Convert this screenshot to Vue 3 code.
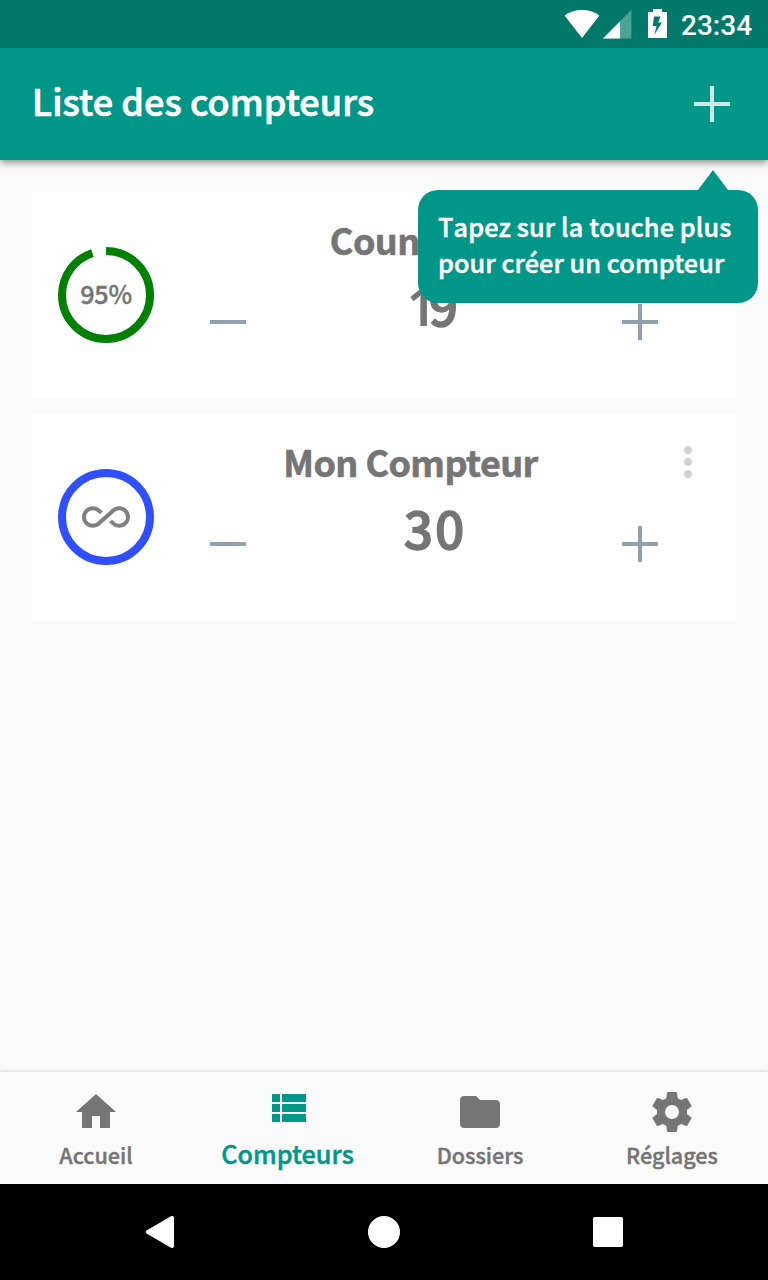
<script setup>
const counters = [
  { name: 'Counter 1', value: 19, percent: 95, color: '#008000' },
  { name: 'Mon Compteur', value: 30, percent: null, color: '#304ffe' },
]

const tabs = [
  { label: 'Accueil', path: 'M10 20v-6h4v6h5v-8h3L12 3 2 12h3v8z' },
  { label: 'Compteurs', active: true, path: 'M9 5v4h12V5M9 19h12v-4H9M9 14h12v-4H9M4 9h4V5H4M4 19h4v-4H4M4 14h4v-4H4z' },
  { label: 'Dossiers', path: 'M10 4H4c-1.1 0-2 .9-2 2v12c0 1.1.9 2 2 2h16c1.1 0 2-.9 2-2V8c0-1.1-.9-2-2-2h-8l-2-2z' },
  { label: 'Réglages', path: 'M12 15.5A3.5 3.5 0 0 1 8.5 12 3.5 3.5 0 0 1 12 8.5a3.5 3.5 0 0 1 3.5 3.5 3.5 3.5 0 0 1-3.5 3.5m7.43-2.53c.04-.32.07-.64.07-.97s-.03-.66-.07-1l2.11-1.63c.19-.15.24-.42.12-.64l-2-3.46c-.12-.22-.39-.31-.61-.22l-2.49 1c-.52-.39-1.06-.73-1.69-.98l-.37-2.65A.506.506 0 0 0 14 2h-4c-.25 0-.46.18-.5.42l-.37 2.65c-.63.25-1.17.59-1.69.98l-2.49-1c-.22-.09-.49 0-.61.22l-2 3.46c-.13.22-.07.49.12.64L4.57 11c-.04.34-.07.67-.07 1s.03.65.07.97l-2.11 1.66c-.19.15-.25.42-.12.64l2 3.46c.12.22.39.3.61.22l2.49-1.01c.52.4 1.06.74 1.69.99l.37 2.65c.04.24.25.42.5.42h4c.25 0 .46-.18.5-.42l.37-2.65c.63-.26 1.17-.59 1.69-.99l2.49 1.01c.22.08.49 0 .61-.22l2-3.46c.12-.22.07-.49-.12-.64l-2.11-1.66z' },
]

const infinity = 'M18.6 6.62c-1.44 0-2.8.56-3.77 1.53L7.8 14.39c-.64.64-1.49.99-2.4.99-1.87 0-3.39-1.51-3.39-3.38S3.53 8.62 5.4 8.62c.91 0 1.76.35 2.44 1.03l1.13 1 1.51-1.34L9.22 8.2C8.2 7.18 6.84 6.62 5.4 6.62 2.42 6.62 0 9.04 0 12s2.42 5.38 5.4 5.38c1.44 0 2.8-.56 3.77-1.53l7.03-6.24c.64-.64 1.49-.99 2.4-.99 1.87 0 3.39 1.51 3.39 3.38s-1.52 3.38-3.39 3.38c-.9 0-1.76-.35-2.44-1.03l-1.14-1.01-1.51 1.34 1.27 1.12c1.02 1.01 2.37 1.57 3.82 1.57 2.98 0 5.4-2.41 5.4-5.38s-2.42-5.37-5.4-5.37z'
</script>

<template>
  <div class="screen">
    <header class="status">
      <svg width="68" height="30" viewBox="0 0 68 30">
        <path fill="#fff" d="M.6 6.6C5 3 11 1 18 1s13 2 17.400 5.600L18 29z" />
        <path fill="#fff" fill-opacity=".3" d="M67.400 .8V29.600H39z" />
        <path fill="#fff" d="M56 12.500V29.600H39z" />
      </svg>
      <svg class="battery" width="20" height="30" viewBox="0 0 20 30">
        <path fill="#fff" fill-rule="evenodd" d="M5 0h9v3h5v26H0V3h5zM6 7.500 4.800 17h3.800l-2.400 9L14 13.500h-3.800L12.600 7.500z" />
      </svg>
      <span class="time">23:34</span>
    </header>

    <div class="appbar">
      <h1>Liste des compteurs</h1>
      <svg width="36" height="36"><path d="M0 18h36M18 0v36" stroke="#cceae7" stroke-width="4" /></svg>
      <div class="tip">
        <svg class="tip-arrow" width="30" height="20"><path d="M15 0 30 20H0z" fill="#009688" /></svg>
        <span class="tip-lead">Tapez sur la touche plus</span><br />pour créer un compteur
      </div>
    </div>

    <main class="list">
      <article v-for="c in counters" :key="c.name" class="card">
        <div class="ring">
          <svg class="ring-track" width="96" height="96">
            <circle cx="48" cy="48" r="44" fill="none" :stroke="c.color" stroke-width="8" pathLength="100"
              :stroke-dasharray="c.percent ? c.percent + ' 100' : null" transform="rotate(-90 48 48)" />
          </svg>
          <span v-if="c.percent" class="ring-value">{{ c.percent }}%</span>
          <svg v-else width="48" height="48" viewBox="0 0 24 24"><path :d="infinity" fill="#808080" /></svg>
        </div>
        <div class="body">
          <div class="head">
            <h2 :class="{ numbered: c.percent }">{{ c.name }}</h2>
            <svg class="more" width="8" height="32" fill="#d3d3d3">
              <circle cx="4" cy="4" r="4" /><circle cx="4" cy="16" r="4" /><circle cx="4" cy="28" r="4" />
            </svg>
          </div>
          <div class="controls">
            <svg width="36" height="36"><path d="M0 18h36" stroke="#90a0b0" stroke-width="4" /></svg>
            <span class="value"><span v-for="(d, i) in String(c.value)" :key="i" :class="{ one: d === '1' }">{{ d }}</span></span>
            <svg width="36" height="36"><path d="M0 18h36M18 0v36" stroke="#90a0b0" stroke-width="4" /></svg>
          </div>
        </div>
      </article>
    </main>

    <nav class="tabs">
      <div v-for="t in tabs" :key="t.label" class="tab" :class="{ active: t.active }">
        <svg width="48" height="48" viewBox="0 0 24 24"><path :d="t.path" fill="currentColor" /></svg>
        <span>{{ t.label }}</span>
      </div>
    </nav>

    <footer class="system">
      <svg width="32" height="32"><path d="M4 16 28 2V30z" fill="#fff" stroke="#fff" stroke-width="4" stroke-linejoin="round" /></svg>
      <svg width="32" height="32"><circle cx="16" cy="16" r="16" fill="#fff" /></svg>
      <svg width="32" height="32"><rect x="1" y="1" width="30" height="30" rx="2" fill="#fff" /></svg>
    </footer>
  </div>
</template>

<style>
body {
  margin: 0;
}
</style>

<style scoped>
.screen {
  width: 768px;
  height: 1280px;
  display: flex;
  flex-direction: column;
  overflow: hidden;
  background: #fafafa;
  color: #757575;
  font-family: "Noto Sans CJK SC", "Noto Sans", sans-serif;
  font-weight: 500;
}
svg {
  display: block;
  flex: none;
}
h1, h2 {
  margin: 0;
}
.status {
  height: 48px;
  flex: none;
  box-sizing: border-box;
  padding: 9px 16px 0 0;
  display: flex;
  justify-content: flex-end;
  background: #00796b;
  color: #fff;
}
.battery {
  margin: 0 13px 0 16px;
}
.time {
  font: 500 28px/33px Roboto, sans-serif;
  width: 71px;
}
.appbar {
  position: relative;
  z-index: 2;
  height: 112px;
  flex: none;
  box-sizing: border-box;
  padding: 0 38px 0 32px;
  display: flex;
  align-items: center;
  justify-content: space-between;
  background: #009688;
  color: #fff;
  box-shadow: 0 3px 7px rgba(0, 0, 0, .4);
  clip-path: inset(0 0 -200px 0);
}
h1 {
  font-size: 36px;
  line-height: 52px;
  font-weight: 500;
  padding-bottom: 9px;
  letter-spacing: .04px;
  -webkit-text-stroke: .7px currentColor;
}
.tip {
  position: absolute;
  top: 142px;
  right: 10px;
  width: 340px;
  height: 113px;
  box-sizing: border-box;
  padding: 18px 20px;
  border-radius: 20px;
  background: #009688;
  font-size: 25.2px;
  line-height: 36px;
  letter-spacing: .1px;
  -webkit-text-stroke: .5px currentColor;
  white-space: nowrap;
}
.tip-lead {
  font-kerning: none;
  letter-spacing: .14px;
}
.tip-arrow {
  position: absolute;
  top: -20px;
  right: 30px;
}
.list {
  flex: 1;
  padding: 32px;
  display: flex;
  flex-direction: column;
  gap: 16px;
}
.card {
  height: 206px;
  display: flex;
  background: #fff;
}
.ring {
  width: 148px;
  display: grid;
  place-items: center;
}
.ring > * {
  grid-area: 1 / 1;
}
.ring-value {
  font-size: 25.2px;
  line-height: 36px;
  padding-bottom: 4px;
  letter-spacing: -.3px;
  -webkit-text-stroke: .4px currentColor;
}
.body {
  flex: 1;
  padding-top: 18px;
}
.head {
  height: 60px;
  display: grid;
  grid-template-columns: 462px 92px;
  align-items: center;
  justify-items: center;
}
h2 {
  font-size: 36px;
  line-height: 58px;
  padding: 0 1px 2px 0;
  font-weight: 700;
  letter-spacing: -.6px;
  -webkit-text-stroke: .6px currentColor;
}
.numbered {
  word-spacing: -6px;
}
.controls {
  height: 104px;
  display: grid;
  grid-template-columns: 96px 316px 96px;
  align-items: center;
  justify-items: center;
}
.value {
  display: flex;
  align-items: baseline;
  gap: 2px;
  font-size: 51.5px;
  line-height: 60px;
  padding-bottom: 34px;
  -webkit-text-stroke: 1.300px currentColor;
}
/* Narrow figure without a foot serif */
.one {
  width: 17px;
  text-indent: -3px;
  font-family: "Noto Sans", sans-serif;
  font-weight: 600;
  -webkit-text-stroke: 0;
}
.tabs {
  height: 112px;
  flex: none;
  display: grid;
  grid-template-columns: repeat(4, 1fr);
  box-shadow: 0 -1px 4px rgba(0, 0, 0, .13);
}
.tab {
  display: flex;
  flex-direction: column;
  align-items: center;
  padding-top: 16px;
  font-size: 21.600px;
  line-height: 38px;
  -webkit-text-stroke: .4px currentColor;
}
.tab.active {
  padding-top: 12px;
  font-size: 25.2px;
  line-height: 42px;
  -webkit-text-stroke: .5px currentColor;
  color: #009688;
}
.active span {
  padding-right: 1px;
}
.system {
  height: 96px;
  flex: none;
  padding: 0 48px;
  display: grid;
  grid-template-columns: repeat(3, 1fr);
  align-items: center;
  justify-items: center;
  background: #000;
}
</style>
